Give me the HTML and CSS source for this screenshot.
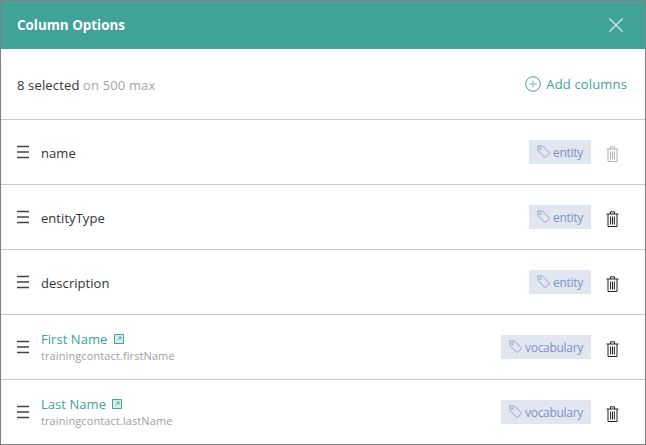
FILE: index.html
```html
<!DOCTYPE html>
<html lang="en">
<head>
<meta charset="utf-8">
<title>Column Options</title>
<link rel="stylesheet" href="styles.css">
</head>
<body>
<svg class="defs" width="0" height="0" aria-hidden="true">
  <symbol id="grip" viewBox="0 0 12 14"><path d="M0 1.500h12M0 7h12M0 12.500h12" stroke="currentColor" stroke-width="1.300" fill="none"/></symbol>
  <symbol id="tag" viewBox="0 0 13 13"><path d="M.5 1h5l6.600 6.600a.9.9 0 0 1 0 1.300l-3.200 3.200a.9.9 0 0 1-1.300 0L1 5.500V1.500z" fill="none" stroke="currentColor" stroke-width="1"/><circle cx="3.500" cy="3.700" r=".9" fill="none" stroke="currentColor" stroke-width=".8"/></symbol>
  <symbol id="trash" viewBox="0 0 13 16"><path d="M.5 3h12M4.500 3V.8h4V3M2 3v12.500h9V3M4.600 5.500v8M6.500 5.500v8M8.400 5.500v8" fill="none" stroke="currentColor" stroke-width="1"/></symbol>
  <symbol id="ext" viewBox="0 0 10 10"><path d="M.5.5h9v9h-9z" fill="#d9eeeb" stroke="currentColor" stroke-width="1"/><path d="M4.500 3H7v2.500M7 3 3.500 6.500" fill="none" stroke="currentColor" stroke-width=".9"/></symbol>
</svg>
<main class="dialog">
  <header class="head">
    <h1 class="title">Column Options</h1>
    <svg class="close" viewBox="0 0 14 14" aria-label="Close"><path d="M.5.5l13 13M13.500.5l-13 13" stroke="currentColor" stroke-width="1.300" fill="none"/></svg>
  </header>
  <section class="summary">
    <p class="count">8 selected <span class="muted">on 500 max</span></p>
    <a class="add">
      <svg class="plus" viewBox="0 0 16 16"><circle cx="8" cy="8" r="7.300" fill="none" stroke="currentColor" stroke-width="1"/><path d="M8 4.200v7.600M4.200 8h7.600" stroke="#9fd0c8" stroke-width="1.400"/></svg>
      Add columns
    </a>
  </section>
  <ul class="rows">
    <li class="row">
      <svg class="grip"><use href="#grip"/></svg>
      <div class="label"><span class="name">name</span></div>
      <span class="badge"><svg class="tag"><use href="#tag"/></svg>entity</span>
      <svg class="trash off"><use href="#trash"/></svg>
    </li>
    <li class="row">
      <svg class="grip"><use href="#grip"/></svg>
      <div class="label"><span class="name">entityType</span></div>
      <span class="badge"><svg class="tag"><use href="#tag"/></svg>entity</span>
      <svg class="trash"><use href="#trash"/></svg>
    </li>
    <li class="row">
      <svg class="grip"><use href="#grip"/></svg>
      <div class="label"><span class="name">description</span></div>
      <span class="badge"><svg class="tag"><use href="#tag"/></svg>entity</span>
      <svg class="trash"><use href="#trash"/></svg>
    </li>
    <li class="row">
      <svg class="grip"><use href="#grip"/></svg>
      <div class="label">
        <span class="link">First Name <svg class="ext"><use href="#ext"/></svg></span>
        <span class="sub">trainingcontact.firstName</span>
      </div>
      <span class="badge"><svg class="tag"><use href="#tag"/></svg>vocabulary</span>
      <svg class="trash"><use href="#trash"/></svg>
    </li>
    <li class="row">
      <svg class="grip"><use href="#grip"/></svg>
      <div class="label">
        <span class="link">Last Name <svg class="ext"><use href="#ext"/></svg></span>
        <span class="sub">trainingcontact.lastName</span>
      </div>
      <span class="badge"><svg class="tag"><use href="#tag"/></svg>vocabulary</span>
      <svg class="trash"><use href="#trash"/></svg>
    </li>
  </ul>
</main>
</body>
</html>
```
FILE: styles.css
```css
* { box-sizing: border-box; }
html, body { margin: 0; padding: 0; }
body { width: 646px; height: 445px; background: #fff; font-family: "Open Sans", "Noto Sans", sans-serif; overflow: hidden; }
.defs { position: absolute; }
.dialog { width: 646px; height: 445px; border: 1px solid #7f7f7f; display: flex; flex-direction: column; }
.head { height: 48px; background: #41a298; color: #fff; display: flex; align-items: center; justify-content: space-between; padding: 0 22px 0 16px; flex: none; }
.title { margin: 0; font-size: 13.4px; font-weight: 700; }
.close { width: 14px; height: 14px; color: #d5ebe8; }
.summary { height: 70px; flex: none; display: flex; align-items: center; justify-content: space-between; padding: 2px 18px 0 16px; }
.count { margin: 0; font-size: 13px; color: #333; letter-spacing: 0.15px; }
.muted { color: #a5a5a5; }
.add { display: flex; align-items: center; gap: 5px; font-size: 13px; color: #41a298; letter-spacing: 0.15px; margin-top: -2px; }
.plus { width: 16px; height: 16px; }
.rows { list-style: none; margin: 0; padding: 0; flex: 1; }
.row { height: 65px; border-top: 1px solid #c8c8c8; display: flex; align-items: center; padding: 0 26px 0 16px; }
.grip { width: 12px; height: 14px; color: #444; margin-right: 12px; flex: none; }
.label { flex: 1; display: flex; flex-direction: column; min-width: 0; }
.name { font-size: 13px; color: #333; letter-spacing: 0.05px; padding-top: 2px; }
.link { font-size: 13px; line-height: 16px; color: #41a298; letter-spacing: 0.05px; display: flex; align-items: center; gap: 1px; white-space: pre; }
.sub { font-size: 11px; line-height: 15px; color: #a0a0a0; letter-spacing: 0.1px; padding-top: 1px; }
.ext { width: 10px; height: 10px; margin-left: 2px; }
.badge { height: 24px; background: #e2e6f0; color: #7c94c8; font-size: 12px; letter-spacing: -0.3px; display: flex; align-items: center; gap: 3px; padding: 1px 8px 0; margin-right: 15px; flex: none; }
.tag { width: 13px; height: 13px; color: #8ea2cc; margin-top: -2px; }
.trash { width: 13px; height: 16px; color: #222; flex: none; margin-top: 4px; }
.trash.off { color: #b0b0b0; }
```
